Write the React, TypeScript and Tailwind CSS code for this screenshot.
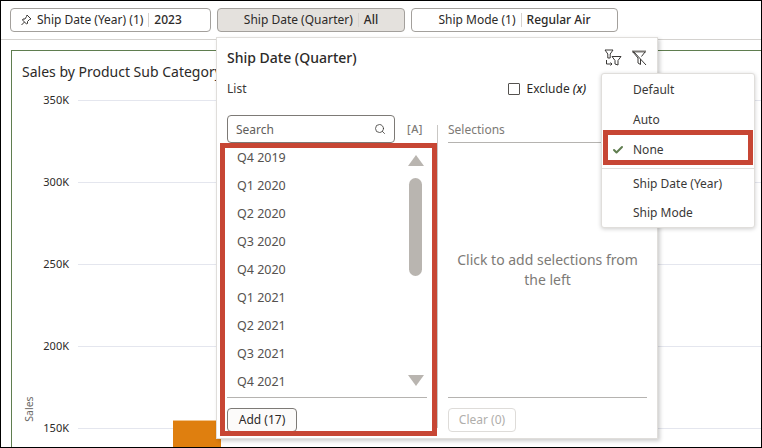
import { Search, Check } from "lucide-react";

const font = { fontFamily: '"Noto Sans", "Open Sans", sans-serif' };

const quarters = ["Q4 2019", "Q1 2020", "Q2 2020", "Q3 2020", "Q4 2020", "Q1 2021", "Q2 2021", "Q3 2021", "Q4 2021"];
const ticks = ["350K", "300K", "250K", "200K", "150K"];

function FilterPill({ label, value, pin, active, className }: { label: string; value: string; pin?: boolean; active?: boolean; className: string }) {
  return (
    <div className={`h-[24px] flex items-center rounded-[4px] border border-[#a3a09c] text-[12px] text-[#2c2a28] ${active ? "bg-[#e4e1dd]" : "bg-white"} ${className}`}>
      {pin && (
        <svg width="12" height="12" viewBox="0 0 12 12" className="mr-[5px]" fill="none" stroke="#3a3836" strokeWidth="1">
          <path d="M7 1 L11 5 L9.5 5.5 L7.5 7.5 L7.5 9.5 L6.5 10 L2.5 6 L3 5 L5 5 L6.5 2.5 Z M4.5 8 L1.5 11" />
        </svg>
      )}
      <span>{label}</span>
      <span className="mx-[5px] h-[14px] w-px bg-[#d6d3cf]" />
      <span className="font-medium">{value}</span>
    </div>
  );
}

export default function App() {
  return (
    <div style={font} className="relative w-[762px] h-[448px] overflow-hidden bg-white border border-black">
      {/* filter bar */}
      <div className="h-[39px] border-b border-[#d4d2cf] flex gap-[6px] pl-[9px] pt-[7px]">
        <FilterPill className="w-[201px] pl-[9px]" pin label="Ship Date (Year) (1)" value="2023" />
        <FilterPill className="w-[188px] justify-center" active label="Ship Date (Quarter)" value="All" />
        <FilterPill className="w-[207px] justify-center" label="Ship Mode (1)" value="Regular Air" />
      </div>

      {/* chart */}
      <div className="relative ml-[10px] mt-[10px] h-[420px] border-l border-t border-[#5f7d4f]">
        <div className="pl-[10px] pt-[11px] h-[49px] text-[14px] leading-[20px] text-[#2c2a28] whitespace-nowrap">Sales by Product Sub Category</div>
        <div>
          {ticks.map((t) => (
            <div key={t} className="h-[82px] flex items-start">
              <span className="w-[57px] -mt-[9px] text-right text-[11px] leading-[18px] text-[#2c2a28]">{t}</span>
              <div className="ml-[9px] flex-1 h-px bg-[#e4e6ee]" />
            </div>
          ))}
        </div>
        <span className="absolute left-[4px] top-[351px] -rotate-90 text-[10.5px] leading-[14px] text-[#6b6966]">Sales</span>
        <div className="absolute left-[161px] top-[369px] w-[48px] h-[40px] bg-[#df7f0f] border-t border-[#f2c48c]" />
      </div>

      {/* quarter popup */}
      <div className="absolute left-[215px] top-[36px] w-[442px] h-[402px] bg-white border border-[#e0dedb] shadow-[2px_2px_4px_rgba(0,0,0,0.2)] px-[10px] text-[#2c2a28]">
        <div className="h-[33px] flex items-end justify-between">
          <span className="text-[14px] leading-[20px] font-medium pb-[3px]">Ship Date (Quarter)</span>
          <div className="flex items-center gap-[9px] mb-[4px]">
            <svg width="18" height="18" viewBox="0 0 18 18" fill="none" stroke="#3a3836" strokeWidth="1">
              <path d="M1 1 H9 L6.2 5 V9 L3.8 9 V5 Z" />
              <path d="M8 7.5 H17 L14 11.5 V16 L11 15 V11.5 Z" />
              <path d="M2.5 11 V15 H8 M6.5 13.5 L8 15 L6.5 16.5" />
            </svg>
            <svg width="16" height="16" viewBox="0 0 16 16" fill="none" stroke="#3a3836" strokeWidth="1">
              <path d="M1 1.5 H15" strokeWidth="2" stroke="#7d7a76" />
              <path d="M2 2 L7 8 V13 L9.5 14.5 V9" />
              <path d="M14 2 L10.5 6.5 M2.5 1.5 L15 15" />
            </svg>
          </div>
        </div>
        <div className="mt-[8px] h-[20px] flex items-center text-[12px]">
          <span className="text-[#3a3836]">List</span>
          <span className="ml-[262px] w-[12px] h-[12px] rounded-[1px] border border-[#55524f]" />
          <span className="ml-[6px]">Exclude <i className="font-medium">(x)</i></span>
        </div>

        <div className="mt-[16px] flex">
          {/* list column */}
          <div className="w-[200px]">
            <div className="flex items-center">
              <div className="w-[168px] h-[28px] shrink-0 flex items-center justify-between rounded-[4px] border border-[#7d7a76] px-[8px] text-[12px] text-[#5f5d5a]">
                <span className="pt-[1px]">Search</span>
                <Search size={12} strokeWidth={1.6} className="text-[#3a3836]" />
              </div>
              <span className="ml-[12px] text-[11px] font-medium tracking-[0.5px] text-[#7d7a76]">[A]</span>
            </div>
            <div className="relative h-[254px] overflow-hidden">
              {quarters.map((q) => (
                <div key={q} className="h-[28px] pl-[10px] pt-[2px] flex items-center text-[12.5px] text-[#55524f]">{q}</div>
              ))}
              <svg width="16" height="12" viewBox="0 0 16 12" className="absolute left-[181px] top-[12px]"><path d="M8 0 L16 11 H0 Z" fill="#b9b5b0" /></svg>
              <div className="absolute left-[182px] top-[35px] w-[13px] h-[98px] rounded-full bg-[#b9b5b0]" />
              <svg width="16" height="12" viewBox="0 0 16 12" className="absolute left-[181px] top-[232px]"><path d="M0 0 H16 L8 11 Z" fill="#b9b5b0" /></svg>
            </div>
            <div className="border-t border-[#b5b3b0] pt-[8px]">
              <button className="w-[70px] h-[24px] rounded-[4px] border border-[#7d7a76] bg-[#fcfbfa] text-[12px]">Add (17)</button>
            </div>
          </div>

          {/* selections column */}
          <div className="ml-[10px] mt-[10px] h-[303px] w-px bg-[#c9c7c4]" />
          <div className="ml-[10px] w-[199px] flex flex-col">
            <div className="h-[28px] flex items-end pb-[3px] border-b border-[#b5b3b0] text-[12px] text-[#7d7a76]">Selections</div>
            <div className="h-[254px] flex items-center justify-center text-center text-[14px] leading-[20px] text-[#7d7a76] px-[4px]">Click to add selections from the left</div>
            <div className="border-t border-[#b5b3b0] pt-[8px]">
              <button className="w-[68px] h-[24px] rounded-[4px] border border-[#dedcd9] text-[12px] text-[#b0aeab]">Clear (0)</button>
            </div>
          </div>
        </div>
      </div>

      {/* red callout round the list */}
      <div className="absolute left-[219px] top-[142px] w-[217px] h-[293px] border-[5px] border-[#c74634]" />

      {/* limit-by menu */}
      <div className="absolute left-[600px] top-[72px] w-[154px] h-[155px] bg-white rounded-[3px] border border-[#e0dedb] shadow-[0_1px_4px_rgba(0,0,0,0.2)] text-[12px] text-[#3a3836]">
        <div className="h-[30px] mt-[1px] pl-[31px] flex items-center">Default</div>
        <div className="h-[30px] pl-[31px] flex items-center">Auto</div>
        <div className="relative h-[30px] pl-[31px] flex items-center">
          <Check size={12} strokeWidth={4} className="absolute left-[10px] text-[#5f7d4f]" />
          None
        </div>
        <div className="mt-[3px] border-t border-[#e0dedb] h-[30px] pl-[31px] flex items-center">Ship Date (Year)</div>
        <div className="h-[29px] pl-[31px] flex items-center">Ship Mode</div>
      </div>

      {/* red callout round None */}
      <div className="absolute left-[602px] top-[129px] w-[150px] h-[35px] border-[5px] border-[#c74634]" />
    </div>
  );
}
